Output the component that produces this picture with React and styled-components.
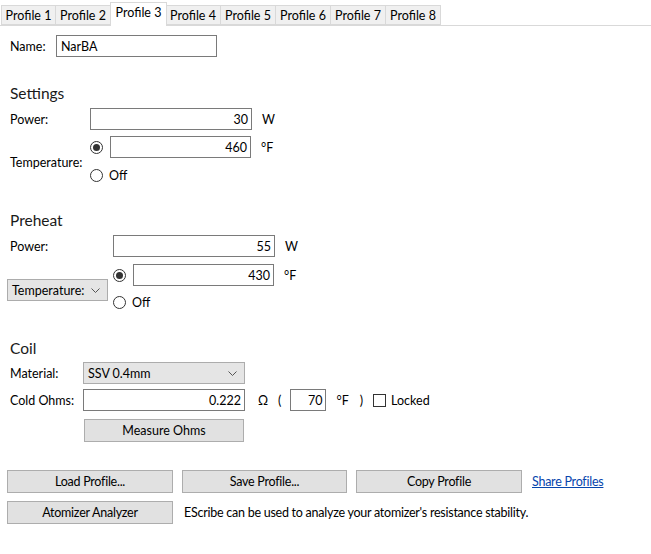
import React from "react";
import styled, { createGlobalStyle } from "styled-components";

const Global = createGlobalStyle`
  html, body { margin: 0; padding: 0; background: #ffffff; }
  body {
    font-family: "Segoe UI", Lato, "Noto Sans", "Liberation Sans", sans-serif;
    font-size: 12.5px;
    color: #000;
  }
  * { box-sizing: border-box; }
`;

const Page = styled.div`
  width: 651px;
  height: 554px;
  background: #fff;
  overflow: hidden;
`;

const TabStrip = styled.div`
  display: flex;
  align-items: flex-end;
  height: 26px;
  padding-left: 1px;
  border-bottom: 1px solid #d9d9d9;
`;

const Tab = styled.div`
  width: ${(p) => (p.$active ? 57 : 55)}px;
  height: ${(p) => (p.$active ? 24 : 20)}px;
  margin-left: ${(p) => (p.$active ? -1 : 0)}px;
  margin-right: ${(p) => (p.$active ? -1 : 0)}px;
  margin-bottom: ${(p) => (p.$active ? -1 : 0)}px;
  position: relative;
  z-index: ${(p) => (p.$active ? 1 : 0)};
  display: flex;
  align-items: ${(p) => (p.$active ? "flex-start" : "center")};
  padding-top: ${(p) => (p.$active ? 2 : 0)}px;
  justify-content: center;
  background: ${(p) => (p.$active ? "#ffffff" : "#f0f0f0")};
  border: 1px solid #d9d9d9;
  border-bottom: ${(p) => (p.$active ? "none" : "1px solid #d9d9d9")};
  border-left: ${(p) => (p.$first || p.$active ? "1px solid #d9d9d9" : "none")};
  white-space: nowrap;
`;

const Content = styled.div`
  padding: 9px 0 0 10px;
`;

const Row = styled.div`
  display: flex;
  align-items: center;
  height: ${(p) => p.$h || 22}px;
  margin-top: ${(p) => p.$mt || 0}px;
`;

const Label = styled.span`
  width: ${(p) => p.$w}px;
  flex: none;
  white-space: nowrap;
`;

const Heading = styled.div`
  font-size: 15.5px;
  height: 20px;
  line-height: 20px;
  margin-top: ${(p) => p.$mt}px;
  margin-bottom: ${(p) => p.$mb}px;
  color: #1a1a1a;
`;

const TextBox = styled.div`
  width: ${(p) => p.$w}px;
  height: 22px;
  border: 1px solid #7a7a7a;
  background: #fff;
  display: flex;
  align-items: center;
  justify-content: ${(p) => (p.$left ? "flex-start" : "flex-end")};
  padding: 0 3px 0 4px;
  flex: none;
`;

const Unit = styled.span`
  margin-left: ${(p) => p.$ml ?? 10}px;
  white-space: nowrap;
`;

const TempGrid = styled.div`
  display: grid;
  grid-template-columns: ${(p) => p.$w}px auto;
  grid-template-rows: 22px 20px;
  row-gap: ${(p) => p.$gap}px;
  margin-top: ${(p) => p.$mt}px;
  align-items: center;
`;

const TempLabel = styled.div`
  grid-row: 1 / span 2;
  align-self: center;
  margin-top: ${(p) => p.$mt || 0}px;
`;

const RadioLine = styled.div`
  display: flex;
  align-items: center;
  height: 100%;
`;

const RadioDot = styled.span`
  width: 13px;
  height: 13px;
  border-radius: 50%;
  border: 1px solid #333;
  flex: none;
  margin-right: ${(p) => p.$mr}px;
  display: flex;
  align-items: center;
  justify-content: center;
  &::after {
    content: "";
    width: 7px;
    height: 7px;
    border-radius: 50%;
    background: ${(p) => (p.$on ? "#333" : "transparent")};
  }
`;

const Combo = styled.div`
  width: ${(p) => p.$w}px;
  height: 22px;
  margin-left: ${(p) => p.$ml || 0}px;
  background: #e5e5e5;
  border: 1px solid #acacac;
  display: flex;
  align-items: center;
  justify-content: space-between;
  padding: 0 7px 0 4px;
  flex: none;
`;

const CheckBox = styled.span`
  width: 13px;
  height: 13px;
  border: 1px solid #333;
  background: #fff;
  margin: 0 5px 0 10px;
  flex: none;
`;

const Button = styled.div`
  width: ${(p) => p.$w}px;
  height: 23px;
  margin-left: ${(p) => p.$ml || 0}px;
  background: #e1e1e1;
  border: 1px solid #adadad;
  display: flex;
  align-items: center;
  justify-content: center;
  flex: none;
  white-space: nowrap;
`;

const ButtonRow = styled.div`
  display: flex;
  align-items: center;
  margin-top: ${(p) => p.$mt}px;
  margin-left: -3px;
  gap: 9px;
  letter-spacing: -0.25px;
`;

const LinkText = styled.span`
  color: #0645ad;
  text-decoration: underline;
  margin-left: 1px;
  white-space: nowrap;
`;

const Note = styled.span`
  margin-left: 2px;
  white-space: nowrap;
`;

const Chevron = () => (
  <svg width="9" height="5" viewBox="0 0 9 5">
    <path d="M0.5 0.5 L4.5 4.5 L8.5 0.5" fill="none" stroke="#555" strokeWidth="1" />
  </svg>
);

const profiles = ["Profile 1", "Profile 2", "Profile 3", "Profile 4", "Profile 5", "Profile 6", "Profile 7", "Profile 8"];

export default function App() {
  return (
    <Page>
      <Global />
      <TabStrip>
        {profiles.map((p, i) => (
          <Tab key={p} $active={i === 2} $first={i === 0}>
            {p}
          </Tab>
        ))}
      </TabStrip>
      <Content>
        <Row>
          <Label $w={46}>Name:</Label>
          <TextBox $w={161} $left>NarBA</TextBox>
        </Row>

        <Heading $mt={26} $mb={5}>Settings</Heading>
        <Row>
          <Label $w={80}>Power:</Label>
          <TextBox $w={162}>30</TextBox>
          <Unit>W</Unit>
        </Row>
        <TempGrid $w={80} $gap={7} $mt={6}>
          <TempLabel $mt={4}>Temperature:</TempLabel>
          <RadioLine>
            <RadioDot $on $mr={7} />
            <TextBox $w={141}>460</TextBox>
            <Unit>°F</Unit>
          </RadioLine>
          <RadioLine>
            <RadioDot $mr={6} />
            Off
          </RadioLine>
        </TempGrid>

        <Heading $mt={25} $mb={5}>Preheat</Heading>
        <Row>
          <Label $w={103}>Power:</Label>
          <TextBox $w={162}>55</TextBox>
          <Unit>W</Unit>
        </Row>
        <TempGrid $w={103} $gap={6} $mt={7}>
          <TempLabel $mt={4}>
            <Combo $w={101} $ml={-3}>
              Temperature:
              <Chevron />
            </Combo>
          </TempLabel>
          <RadioLine>
            <RadioDot $on $mr={7} />
            <TextBox $w={141}>430</TextBox>
            <Unit>°F</Unit>
          </RadioLine>
          <RadioLine>
            <RadioDot $mr={6} />
            Off
          </RadioLine>
        </TempGrid>

        <Heading $mt={26} $mb={4}>Coil</Heading>
        <Row>
          <Label $w={73}>Material:</Label>
          <Combo $w={162}>
            SSV 0.4mm
            <Chevron />
          </Combo>
        </Row>
        <Row $mt={5}>
          <Label $w={73}>Cold Ohms:</Label>
          <TextBox $w={162}>0.222</TextBox>
          <Unit $ml={13}>Ω</Unit>
          <Unit $ml={10}>(</Unit>
          <Unit $ml={9} as="span">
            <TextBox $w={36}>70</TextBox>
          </Unit>
          <Unit $ml={10}>°F</Unit>
          <Unit $ml={11}>)</Unit>
          <CheckBox />
          Locked
        </Row>
        <Row $mt={8} $h={23}>
          <Label $w={74} />
          <Button $w={160}>Measure Ohms</Button>
        </Row>

        <ButtonRow $mt={28}>
          <Button $w={166}>Load Profile...</Button>
          <Button $w={165}>Save Profile...</Button>
          <Button $w={166}>Copy Profile</Button>
          <LinkText>Share Profiles</LinkText>
        </ButtonRow>
        <ButtonRow $mt={8}>
          <Button $w={166}>Atomizer Analyzer</Button>
          <Note>EScribe can be used to analyze your atomizer's resistance stability.</Note>
        </ButtonRow>
      </Content>
    </Page>
  );
}
